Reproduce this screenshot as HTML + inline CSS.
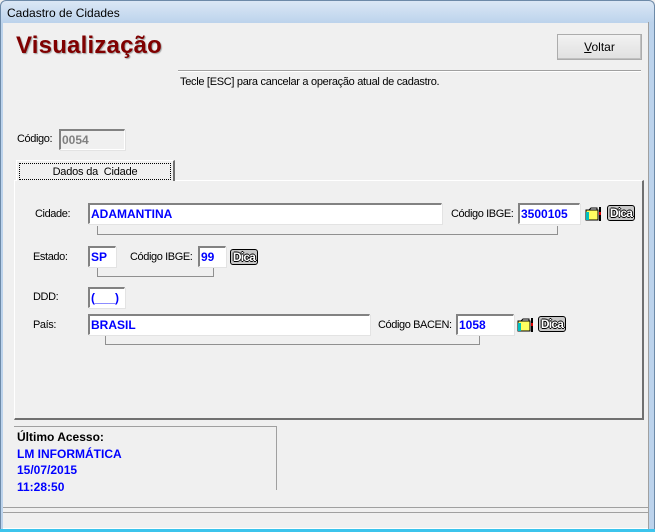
<!DOCTYPE html>
<html><head><meta charset="utf-8"><style>
*{box-sizing:border-box;margin:0;padding:0}
body{width:655px;height:532px;background:#f0f0f0;font-family:"Liberation Sans",sans-serif;font-size:11px;color:#000;position:relative;overflow:hidden;letter-spacing:-0.2px}
.a{position:absolute}
.title{left:0;top:0;width:655px;height:23px;background:linear-gradient(#dbe7f5,#bcd3ec);border:1px solid #6d8aa8;border-bottom:none;border-radius:6px 6px 0 0}
.title span{position:absolute;left:6px;top:5px;font-size:12px;letter-spacing:0}
.lb{left:0;top:22px;width:3px;height:510px;background:#bcd3ec;border-left:1px solid #6d8aa8}
.rb{left:648px;top:22px;width:7px;height:510px;background:#bcd3ec;border-left:1px solid #a0a0a0;border-right:1px solid #6d8aa8}
.bb{left:0;top:529px;width:655px;height:3px;background:#3cc4ec}
.in{background:#fff;border-top:2px solid #828282;border-left:2px solid #828282;border-right:1px solid #fff;border-bottom:1px solid #fff;box-shadow:1px 1px 0 #e3e3e3;font-weight:bold;color:#0000ff;font-size:12px;padding:2px 0 0 1px;height:21px;letter-spacing:0}
.lab{letter-spacing:-0.4px;top:auto}
.br{border:1px solid #909090;border-top:none;height:9px}
.dica{font-weight:bold;font-size:12px;background:#c8c8c8;border:1px solid #000;border-radius:3px;padding:0;width:28px;height:16px;line-height:14px;color:#fff;text-shadow:-1px 0 #000,1px 0 #000,0 1px #000,0 -1px #000;letter-spacing:-0.8px;overflow:hidden;text-align:center}
.ico{width:18px;height:16px}
</style></head><body>
<div class="a title"><span>Cadastro de Cidades</span></div>
<div class="a lb"></div><div class="a rb"></div><div class="a bb"></div>

<div class="a" style="left:16px;top:32px;font-size:24px;font-weight:bold;color:#800000;text-shadow:1px 1px 1px #a0a0a0;letter-spacing:0.2px">Visualização</div>
<div class="a" style="left:557px;top:34px;width:85px;height:26px;border:1px solid #acacac;background:linear-gradient(#f2f2f2,#e0e0e0);box-shadow:inset -1px -1px 0 #c0c0c0;text-align:center;line-height:24px;font-size:12px;letter-spacing:0"><u>V</u>oltar</div>
<div class="a" style="left:178px;top:70px;width:463px;height:2px;border-top:1px solid #a0a0a0;border-bottom:1px solid #fff"></div>
<div class="a" style="left:180px;top:76px;letter-spacing:-0.3px">Tecle [ESC] para cancelar a operação atual de cadastro.</div>

<div class="a lab" style="left:17px;top:133px">Código:</div>
<div class="a in" style="left:59px;top:129px;width:66px;height:21px;background:#f0f0f0;color:#808080">0054</div>

<div class="a" style="left:14px;top:180px;width:630px;height:240px;border-top:1px solid #fff;border-left:1px solid #fff;border-right:2px solid #707070;border-bottom:2px solid #707070"></div>
<div class="a" style="left:16px;top:160px;width:159px;height:21px;border-top:1px solid #fff;border-left:1px solid #fff;border-right:2px solid #707070;background:#f0f0f0"><div style="margin:2px 2px 0;border:1px dotted #000;height:17px;text-align:center;line-height:16px;font-size:11px">Dados da&nbsp; Cidade</div></div>

<div class="a lab" style="left:35px;top:208px">Cidade:</div>
<div class="a in" style="left:88px;top:203px;width:354px">ADAMANTINA</div>
<div class="a br" style="left:97px;top:226px;width:461px"></div>
<div class="a lab" style="left:451px;top:208px">Código IBGE:</div>
<div class="a in" style="left:518px;top:203px;width:62px">3500105</div>
<svg class="a ico" style="left:585px;top:206px" viewBox="0 0 18 16"><rect x="1" y="4" width="12" height="10" fill="#ffff60" stroke="#000"/><rect x="1" y="6" width="3" height="8" fill="#00c0c0"/><path d="M4 4l2-2h6v2" fill="none" stroke="#000"/><rect x="14" y="1" width="2" height="14" fill="#000"/><rect x="14" y="6" width="2" height="3" fill="#e00000"/></svg>
<div class="a dica" style="left:607px;top:205px">Dica</div>

<div class="a lab" style="left:33px;top:251px">Estado:</div>
<div class="a in" style="left:88px;top:246px;width:28px">SP</div>
<div class="a br" style="left:97px;top:268px;width:117px"></div>
<div class="a lab" style="left:130px;top:251px">Código IBGE:</div>
<div class="a in" style="left:198px;top:246px;width:28px">99</div>
<div class="a dica" style="left:230px;top:249px">Dica</div>

<div class="a lab" style="left:33px;top:291px">DDD:</div>
<div class="a in" style="left:88px;top:287px;width:37px">(___)</div>

<div class="a lab" style="left:33px;top:319px">País:</div>
<div class="a in" style="left:88px;top:314px;width:282px">BRASIL</div>
<div class="a br" style="left:105px;top:336px;width:375px"></div>
<div class="a lab" style="left:378px;top:319px">Código BACEN:</div>
<div class="a in" style="left:456px;top:314px;width:58px">1058</div>
<svg class="a ico" style="left:517px;top:317px" viewBox="0 0 18 16"><rect x="1" y="4" width="12" height="10" fill="#ffff60" stroke="#000"/><rect x="1" y="6" width="3" height="8" fill="#00c0c0"/><path d="M4 4l2-2h6v2" fill="none" stroke="#000"/><rect x="14" y="1" width="2" height="14" fill="#000"/><rect x="14" y="6" width="2" height="3" fill="#e00000"/></svg>
<div class="a dica" style="left:538px;top:316px">Dica</div>

<div class="a" style="left:14px;top:426px;width:263px;height:64px;border-top:1px solid #a0a0a0;border-right:1px solid #a0a0a0"></div>
<div class="a" style="left:17px;top:429px;font-weight:bold;font-size:12px;line-height:16.5px;letter-spacing:0">Último Acesso:<br><span style="color:#0000ff">LM INFORMÁTICA<br>15/07/2015<br>11:28:50</span></div>

<div class="a" style="left:3px;top:507px;width:645px;border-top:1px solid #a0a0a0"></div>
<div class="a" style="left:3px;top:512px;width:645px;height:17px;border-top:1px solid #a0a0a0;border-bottom:1px solid #fff"></div>
</body></html>
